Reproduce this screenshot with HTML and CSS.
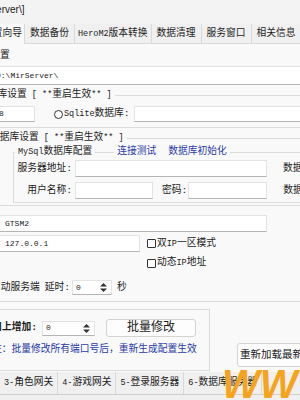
FILE: index.html
```html
<!DOCTYPE html>
<html lang="zh-CN">
<head>
  <meta charset="UTF-8">
  <title>配置向导</title>
  <link rel="stylesheet" href="styles.css">
</head>
<body>
  <div class="win">
    <div class="title"><span>[D:\MirServer\]</span></div>

    <div class="tabs">
      <div class="tab on">配置向导</div>
      <div class="tab">数据备份</div>
      <div class="tab wide"><span class="en">HeroM2</span>版本转换</div>
      <div class="tab">数据清理</div>
      <div class="tab">服务窗口</div>
      <div class="tab">相关信息</div>
    </div>

    <div class="page">
      <div class="cap-line"><span class="cut-dir">服务端位置</span></div>
      <div class="edit path">D:\MirServer\</div>

      <div class="gbox g1">
        <div class="gcap"><span>数据库设置<span class="en"> [ **</span>重启生效<span class="en">** ]</span></span></div>
        <div class="db-row">
          <div class="edit port">8</div>
          <span class="radio"></span>
          <span class="lbl"><span class="en">Sqlite</span>数据库:</span>
          <div class="edit grow"></div>
        </div>
      </div>

      <div class="gbox g2">
        <div class="gcap"><span>数据库设置<span class="en"> [ **</span>重启生效<span class="en">** ]</span></span></div>
        <div class="gbox g3">
          <div class="gcap">
            <span><span class="en">MySql</span>数据库配置</span>
            <span class="links"><span class="link">连接测试</span><span class="link">数据库初始化</span></span>
          </div>
          <div class="frows">
            <div class="frow">
              <span class="flbl">服务器地址:</span>
              <div class="edit w1"></div>
              <span class="tail">数据库名</span>
            </div>
            <div class="frow">
              <span class="flbl">用户名称:</span>
              <div class="edit w2"></div>
              <span class="pw">密码:</span>
              <div class="edit w3"></div>
              <span class="tail">数据库名</span>
            </div>
          </div>
        </div>
      </div>

      <div class="edit gt">GTSM2</div>
      <div class="iprow">
        <div class="edit ip">127.0.0.1</div>
        <span class="chk"><span class="box"></span>双<span class="en">IP</span>一区模式</span>
      </div>
      <div class="chkrow">
        <span class="chk"><span class="box"></span>动态<span class="en">IP</span>地址</span>
      </div>

      <div class="delay">
        <span class="cut-start">启动服务端</span>
        <span class="dl">延时:</span>
        <div class="edit spin">0
          <svg width="7" height="9" viewBox="0 0 7 9"><path d="M3.5 0L7 3.5H0z M3.5 9L0 5.5h7z" fill="#333"/></svg>
        </div>
        <span class="sec">秒</span>
      </div>

      <div class="g4">
        <div class="gbox g5">
          <div class="addrow">
            <span class="add-lbl">端口上增加:</span>
            <div class="edit spin add">0
              <svg width="7" height="9" viewBox="0 0 7 9"><path d="M3.5 0L7 3.5H0z M3.5 9L0 5.5h7z" fill="#333"/></svg>
            </div>
            <div class="btn batch">批量修改</div>
          </div>
          <div class="note">注：批量修改所有端口号后，重新生成配置生效</div>
        </div>
        <div class="btn reload">重新加载最新配置</div>
      </div>
    </div>

    <div class="subtabs">
      <div class="stab"><span class="en">3-</span>角色网关</div>
      <div class="stab"><span class="en">4-</span>游戏网关</div>
      <div class="stab"><span class="en">5-</span>登录服务器</div>
      <div class="stab"><span class="en">6-</span>数据库服务器</div>
    </div>

    <div class="wm">WWW.</div>
  </div>
</body>
</html>
```

FILE: styles.css
```css
* {
  box-sizing: border-box;
  margin: 0;
  padding: 0;
}

body {
  background: #f0f0f0;
  font-family: "Liberation Mono", "Noto Sans CJK SC", monospace;
  font-size: 9.75px;
  line-height: 12px;
  color: #1c1c1c;
}

.win {
  width: 300px;
  height: 400px;
  overflow: hidden;
  position: relative;
  white-space: nowrap;
}

.en {
  font-size: 8.5px;
}

.title {
  height: 24px;
  line-height: 20px;
  background: #f3f3f3;
  font-family: "Liberation Sans", sans-serif;
  font-size: 10px;
}

.title span {
  margin-left: -40px;
}

/* top tab strip */
.tabs {
  display: flex;
  height: 20px;
  background: #f0f0f0;
  border-bottom: 1px solid #d9d9d9;
}

.tab {
  flex: none;
  line-height: 19px;
  padding: 0 5px;
  border-right: 1px solid #d9d9d9;
}

.tab.on {
  margin-left: -22px;
  padding-right: 2px;
  height: 20px;
  background: #f9f9f9;
}

.tab.wide {
  padding: 0 3px;
}

.page {
  height: 328px;
  background: #f9f9f9;
  overflow: hidden;
}

.cap-line {
  margin-top: 6px;
}

.cut-dir {
  margin-left: -39px;
}

/* edit boxes */
.edit {
  display: flex;
  align-items: center;
  background: #fff;
  border: 1px solid #e3e3e3;
  border-bottom-color: #b5b5b5;
  font-size: 8px;
  padding-left: 3px;
}

.path {
  height: 19px;
  margin: 4px -10px 0 -8px;
}

/* group boxes */
.gbox {
  border: 1px solid #dcdcdc;
}

.gcap {
  display: flex;
  margin-top: -7px;
}

.gcap > span {
  background: #f9f9f9;
  padding: 0 3px;
}

.g1 {
  margin: 10px -40px 0 -38px;
  padding-bottom: 5px;
}

.g1 .gcap {
  padding-left: 12px;
}

.db-row {
  display: flex;
  align-items: center;
  height: 16px;
  margin: 5px 0 0 31px;
}

.db-row .edit {
  height: 16px;
}

.port {
  width: 41px;
  padding-left: 4px;
}

.radio {
  width: 9px;
  height: 9px;
  margin-left: 19px;
  border: 1px solid #333;
  border-radius: 50%;
  background: #fff;
}

.lbl {
  margin-left: 1px;
}

.grow {
  flex: 1;
  margin-left: 4px;
}

.g2 {
  margin: 10px -40px 0 -38px;
  padding-bottom: 2px;
}

.g2 > .gcap {
  padding-left: 24px;
}

.g3 {
  margin: 8px 0 0 50px;
  padding-bottom: 3px;
}

.g3 .gcap {
  padding-left: 1px;
}

.g3 .gcap .links {
  margin-left: 19px;
}

.link {
  color: #2a3aa8;
}

.link + .link {
  margin-left: 12px;
}

.frows {
  margin-top: 2px;
}

.frow {
  display: flex;
  align-items: center;
  height: 17px;
}

.frow + .frow {
  margin-top: 5px;
}

.frow .edit {
  height: 17px;
}

.flbl {
  width: 58px;
  margin-right: 3px;
  text-align: right;
}

.w1 { width: 192px; }
.w2 { width: 78px; }
.w3 { width: 79px; }

.pw {
  margin: 0 1px 0 9px;
}

.tail {
  margin-left: 16px;
}

.gt {
  width: 272px;
  height: 17px;
  margin: 9px 0 0 -5px;
  padding-left: 9px;
}

.iprow {
  display: flex;
  align-items: center;
  height: 17px;
  margin-top: 3px;
}

.ip {
  width: 145px;
  height: 17px;
  margin-left: -5px;
  padding-left: 9px;
}

.chk {
  display: flex;
  align-items: center;
  margin-left: 7px;
}

.box {
  width: 9px;
  height: 9px;
  margin-right: 1px;
  border: 1px solid #333;
  border-radius: 1px;
  background: #fff;
}

.chkrow {
  display: flex;
  height: 12px;
  margin: 5px 0 0 140px;
}

.delay {
  display: flex;
  align-items: center;
  height: 15px;
  margin-top: 11px;
}

.cut-start {
  margin-left: -9px;
}

.dl {
  margin-left: 5px;
}

.spin {
  justify-content: space-between;
  width: 40px;
  height: 15px;
  margin-left: 2px;
  padding: 0 4px 0 3px;
}

.sec {
  margin-left: 5px;
}

/* port batch box */
.g4 {
  display: flex;
  align-items: flex-end;
  margin: 6px -10px 0 -20px;
  border-top: 1px solid #dcdcdc;
}

.g5 {
  flex: none;
  width: 230px;
  margin-top: 7px;
  padding: 9px 0 14px;
}

.addrow {
  display: flex;
  align-items: center;
  height: 18px;
}

.add-lbl {
  margin-left: 1.5px;
  font-weight: bold;
}

.add {
  width: 53px;
  margin-left: 5px;
}

.btn {
  display: flex;
  align-items: center;
  justify-content: center;
  flex: none;
  background: #fdfdfd;
  border: 1px solid #d3d3d3;
  border-radius: 3px;
}

.batch {
  width: 90px;
  height: 18px;
  margin-left: 11px;
  font-size: 12px;
}

.note {
  margin: 7px 0 0 11px;
  color: #2a3aa8;
}

.reload {
  width: 90px;
  height: 24px;
  margin: 0 0 4px 27px;
  font-size: 10.5px;
}

/* bottom tab strip */
.subtabs {
  display: flex;
  height: 23px;
  border-bottom: 1px solid #cfcfcf;
}

.stab {
  flex: none;
  line-height: 21px;
  padding: 0 4px;
  border-right: 1px solid #d9d9d9;
}

/* site watermark over the lower tabs */
.wm {
  position: absolute;
  left: 222px;
  top: 362px;
  font: italic bold 40px "Liberation Sans", sans-serif;
  color: #f6a41c;
}
```
